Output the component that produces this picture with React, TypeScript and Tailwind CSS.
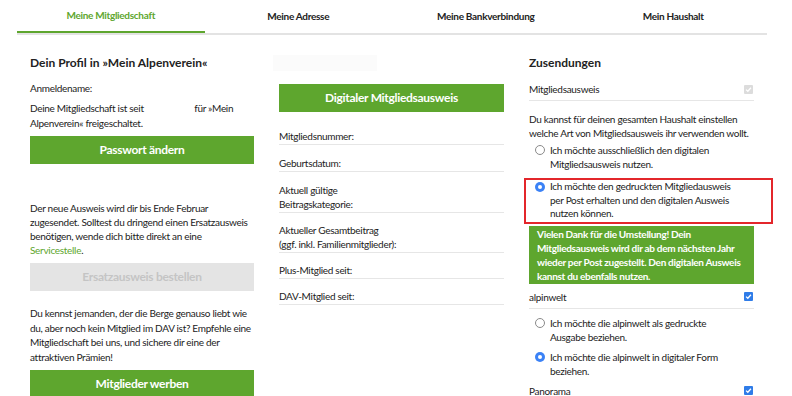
import React from "react";

const green = "bg-[#5ea62e]";

function Tabs() {
    const tabs = ["Meine Mitgliedschaft", "Meine Adresse", "Meine Bankverbindung", "Mein Haushalt"];
    return (
        <div className="mx-[17px] grid w-[750px] grid-cols-4 border-b-2 border-[#e3e3e3]">
            {tabs.map((t, i) => (
                <div
                    key={t}
                    className={
                        i === 0
                            ? "-mb-[2px] flex h-[33px] items-center justify-center border-b-2 border-[#5ea62e] text-[10px] font-bold text-[#5ea62e]"
                            : "flex h-[33px] items-center justify-center text-[10px] font-bold text-[#222]"
                    }
                >
                    {t}
                </div>
            ))}
        </div>
    );
}

function GreenButton({ children, className = "" }: { children: React.ReactNode; className?: string }) {
    return (
        <div className={`flex h-[28px] items-center justify-center ${green} text-[12px] font-bold text-white ${className}`}>
            {children}
        </div>
    );
}

function InfoRow({ children }: { children: React.ReactNode }) {
    return <div className="border-b border-[#e6e6e6] pt-[11px] pb-[1px] text-[10px] leading-[14px]">{children}</div>;
}

function Radio({ checked, children, lh = "leading-[14px]" }: { checked?: boolean; children: React.ReactNode; lh?: string }) {
    return (
        <div className={`flex text-[10px] ${lh}`}>
            <div className="flex w-[20px] shrink-0 justify-center pl-[2px] pt-[2px]">
                {checked ? (
                    <span className="flex h-[10px] w-[10px] items-center justify-center rounded-full bg-[#3b82f6]">
                        <span className="h-[4px] w-[4px] rounded-full bg-white" />
                    </span>
                ) : (
                    <span className="h-[10px] w-[10px] rounded-full border border-[#8a8a8a] bg-white" />
                )}
            </div>
            <div className="pl-[1px]">{children}</div>
        </div>
    );
}

function Check({ disabled }: { disabled?: boolean }) {
    return (
        <span
            className={`flex h-[9px] w-[9px] items-center justify-center rounded-[1px] ${
                disabled ? "bg-[#dcdcdc]" : "bg-[#2f7ce8]"
            }`}
        >
            <svg width="7" height="7" viewBox="0 0 10 10">
                <path d="M1.5 5.2 L4 7.5 L8.5 2.5" fill="none" stroke="white" strokeWidth="1.8" />
            </svg>
        </span>
    );
}

function CheckRow({ label, disabled, line = true }: { label: string; disabled?: boolean; line?: boolean }) {
    return (
        <div className={`flex items-center justify-between pr-[1px] text-[10px] leading-[14px] ${line ? "border-b border-[#e6e6e6] pb-[4px]" : ""}`}>
            <span>{label}</span>
            <Check disabled={disabled} />
        </div>
    );
}

export default function App() {
    return (
        <div
            className="h-[396px] w-[792px] overflow-hidden bg-white tracking-[-0.3px] text-[#222]"
            style={{ fontFamily: "Lato, 'Open Sans', sans-serif" }}
        >
            <Tabs />

            <div className="flex gap-[25px] pl-[30px] pt-[20px]">
                {/* left column */}
                <div className="w-[224px]">
                    <div className="h-[15px] text-[12px] font-bold leading-[15px] tracking-normal">Dein Profil in »Mein Alpenverein«</div>
                    <div className="mt-[11px] text-[10px] leading-[14px]">Anmeldename:</div>
                    <div className="mt-[6px] text-[10px] leading-[15px]">
                        Deine Mitgliedschaft ist seit <span className="inline-block w-[46px]" /> für »Mein Alpenverein« freigeschaltet.
                    </div>
                    <GreenButton className="mt-[5px]">Passwort ändern</GreenButton>
                    <div className="mt-[37px] text-[10px] leading-[14px]">
                        Der neue Ausweis wird dir bis Ende Februar zugesendet. Solltest du dringend einen Ersatzausweis benötigen, wende dich bitte direkt an eine{" "}
                        <span className="text-[#5ea62e]">Servicestelle</span>.
                    </div>
                    <div className="mt-[6px] flex h-[28px] items-center justify-center bg-[#e4e4e4] text-[12px] font-bold text-[#c4c4c4]">
                        Ersatzausweis bestellen
                    </div>
                    <div className="mt-[15px] text-[10px] leading-[14.5px]">
                        Du kennst jemanden, der die Berge genauso liebt wie du, aber noch kein Mitglied im DAV ist? Empfehle eine Mitgliedschaft bei uns, und sichere dir eine der attraktiven Prämien!
                    </div>
                    <GreenButton className="mt-[6px]">Mitglieder werben</GreenButton>
                </div>

                {/* middle column */}
                <div className="w-[225px]">
                    <div className="-ml-[6px] h-[16px] w-[104px] bg-[#fbfbfb]" />
                    <GreenButton className="mt-[13px]">Digitaler Mitgliedsausweis</GreenButton>
                    <div className="mt-[6px]">
                        <InfoRow>Mitgliedsnummer:</InfoRow>
                        <InfoRow>Geburtsdatum:</InfoRow>
                        <div className="border-b border-[#e6e6e6] pt-[11px] pb-[1px] text-[10px] leading-[14px]">
                            Aktuell gültige
                            <br />
                            Beitragskategorie:
                        </div>
                        <div className="border-b border-[#e6e6e6] pt-[10px] pb-[1px] text-[10px] leading-[14px]">
                            Aktueller Gesamtbeitrag
                            <br />
                            (ggf. inkl. Familienmitglieder):
                        </div>
                        <div className="border-b border-[#e6e6e6] pt-[10px] pb-[1px] text-[10px] leading-[14px]">Plus-Mitglied seit:</div>
                        <div className="border-b border-[#e6e6e6] pt-[10px] pb-[1px] text-[10px] leading-[14px]">DAV-Mitglied seit:</div>
                    </div>
                </div>

                {/* right column */}
                <div className="w-[225px]">
                    <div className="h-[15px] text-[12px] font-bold leading-[15px] tracking-normal">Zusendungen</div>
                    <div className="mt-[12px]">
                        <CheckRow label="Mitgliedsausweis" disabled />
                    </div>
                    <div className="mt-[11px] text-[10px] leading-[14px]">
                        Du kannst für deinen gesamten Haushalt einstellen welche Art von Mitgliedsausweis ihr verwenden wollt.
                    </div>
                    <div className="mt-[3px]">
                        <Radio>Ich möchte ausschließlich den digitalen Mitgliedsausweis nutzen.</Radio>
                    </div>
                    <div className="-ml-[5px] -mr-[19px] mt-[7px] border-2 border-[#e3262b] pl-[3px] pb-[1px]">
                        <Radio checked lh="leading-[13.5px]">
                            Ich möchte den gedruckten Mitgliedausweis
                            <br />
                            per Post erhalten und den digitalen Ausweis
                            <br />
                            nutzen können.
                        </Radio>
                    </div>
                    <div className="mt-[2px] bg-[#5ea62e] px-[8px] pb-[1px] pt-[1px] text-[10px] font-bold leading-[14px] text-white">
                        Vielen Dank für die Umstellung! Dein Mitgliedsausweis wird dir ab dem nächsten Jahr wieder per Post zugestellt. Den digitalen Ausweis kannst du ebenfalls nutzen.
                    </div>
                    <div className="mt-[6px]">
                        <CheckRow label="alpinwelt" />
                    </div>
                    <div className="mt-[7px]">
                        <Radio>
                            Ich möchte die alpinwelt als gedruckte
                            <br />
                            Ausgabe beziehen.
                        </Radio>
                    </div>
                    <div className="mt-[6px]">
                        <Radio checked>Ich möchte die alpinwelt in digitaler Form beziehen.</Radio>
                    </div>
                    <div className="mt-[6px]">
                        <CheckRow label="Panorama" />
                    </div>
                </div>
            </div>
        </div>
    );
}
